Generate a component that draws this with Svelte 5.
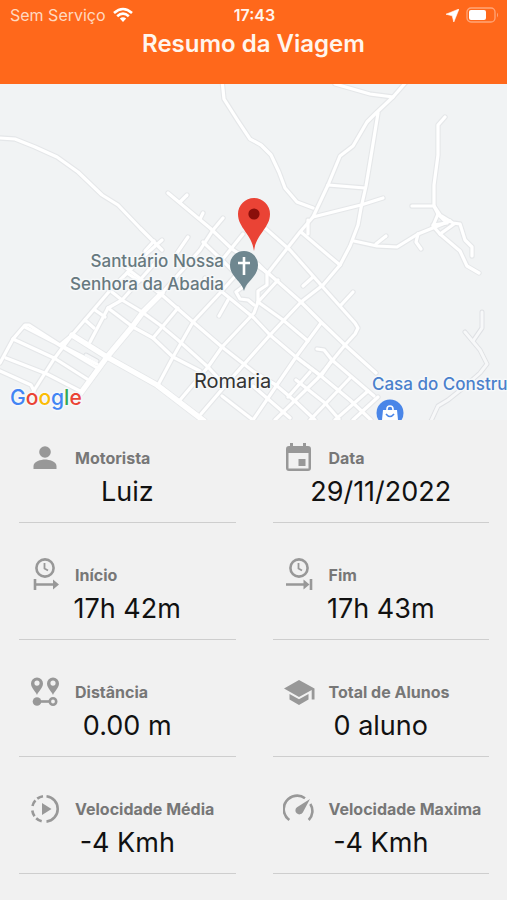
<script>
  const streets = [
    'M0 138 15 139 35 147 57 157 78 172 102 195 118 205 140 228 162 250',
    'M222 80 224 99 238 121 250 139 261 145 271 155 279 172 285 188 297 202 313 208',
    'M335 84 370 94 393 97',
    'M407 81 393 97 376 113 367 122 353 146 340 156 328 185 313 217 300 232 268 273',
    'M378 113 372 150 366 186 361 208 358 225 350 246 340 265 323 285 301 302 270 335 230 380 201 414',
    'M328 185 365 188', 'M313 217 361 205 383 198', 'M308 220 308 234',
    'M445 117 438 125 438 155 434 185 434 206 440 215 453 223 460 224 465 240 472 247 472 256',
    'M412 206 434 206 438 214 433 226 440 234 460 251 467 266 479 273',
    'M438 214 447 223 433 225', 'M440 234 454 224',
    'M354 241 377 246 397 247 418 234 450 221', 'M376 244 386 236', 'M418 234 416 242 421 249',
    'M168 193 210 228 232 249 268 273 301 302 321 322 345 345 376 373',
    'M180 202 187 195', 'M200 219 203 213',
    'M265 228 290 250 321 285 355 323 358 328 355 334 345 345 318 378 275 420',
    'M301 232 328 255 340 265', 'M341 305 353 292', 'M303 286 313 277',
    'M203 242 222 260 232 270', 'M222 260 243 234',
    'M205 278 254 318 270 335 296 357 321 376 350 400 371 420',
    'M258 302 283 320 308 341',
    'M254 305 248 300 240 299 236 292 244 286', 'M258 302 258 291 267 285 267 273 258 264',
    'M125 267 162 295 193 322 222 347 254 372 276 385 296 402 315 420',
    'M112 292 122 300 142 312 160 325 178 340 208 367 222 382',
    'M108 308 133 327 153 338 173 357 200 371',
    'M317 349 324 350 332 360 374 396', 'M296 357 321 376 332 360',
    'M162 293 200 250 213 230 223 218', 'M177 253 188 237', 'M145 251 154 241',
    'M158 385 173 357 193 322 220 293 236 275', 'M153 338 178 308', 'M142 312 162 293',
    'M180 400 208 367 222 347 254 313 258 302 278 280', 'M219 316 228 300',
    'M253 420 296 357 321 323', 'M310 420 350 378', 'M335 420 368 391', 'M353 420 378 397',
    'M288 397 310 372', 'M296 380 325 403 339 419', 'M222 396 253 420', 'M253 386 290 418',
    'M72 335 113 287 143 257 162 240', 'M90 342 108 308 122 300 155 263',
    'M95 310 105 317', 'M85 320 94 328', 'M127 273 139 281',
    'M0 363 13 339 25 325 29 325 60 345 72 335', 'M72 335 54 359 33 392',
    'M25 327 54 342 99 369', 'M13 339 54 358 87 379', 'M6 358 47 374 80 391',
    'M0 371 31 385 34 391', 'M60 345 97 364'
  ];
  const avenues = ['M80 394 107 357 132 327 143 312 162 293', 'M72 335 107 357 157 385 204 421'];
  const lanes = ['M482 312 482 328 473 341', 'M465 332 480 350 487 364 480 373 463 388 448 400 438 406 431 421', 'M86 355 97 361'];

  const items = [
    { icon: 'person', label: 'Motorista', value: 'Luiz' },
    { icon: 'calendar', label: 'Data', value: '29/11/2022' },
    { icon: 'start', label: 'Início', value: '17h 42m' },
    { icon: 'end', label: 'Fim', value: '17h 43m' },
    { icon: 'distance', label: 'Distância', value: '0.00 m' },
    { icon: 'school', label: 'Total de Alunos', value: '0 aluno' },
    { icon: 'average', label: 'Velocidade Média', value: '-4 Kmh' },
    { icon: 'speed', label: 'Velocidade Maxima', value: '-4 Kmh' }
  ];
</script>

<div class="screen">
  <header>
    <div class="status">
      <div class="carrier">
        <span>Sem Serviço</span>
        <svg width="20" height="16" viewBox="0 0 20 16" fill="none" stroke="#fff" stroke-width="2.6" aria-hidden="true">
          <path d="M1 6Q10-2 19 6M4.2 9.3Q10 4 15.8 9.3" />
          <path d="M6.8 11.6Q10 8.8 13.2 11.6L10 15Z" fill="#fff" stroke="none" />
        </svg>
      </div>
      <time>17:43</time>
      <div class="indicators">
        <svg width="13" height="13" viewBox="0 0 13 13" aria-hidden="true"><path d="M13 0 7.8 13 6.2 6.8 0 5.2Z" fill="#fff" stroke="#fff" stroke-width=".6" /></svg>
        <svg width="33" height="16" viewBox="0 0 33 16" aria-hidden="true">
          <rect x="1" y="1" width="28" height="14" rx="4" fill="none" stroke="#ffa578" stroke-width="1.3" />
          <rect x="3" y="3" width="17" height="10" rx="2" fill="#fff" />
          <path d="M31 5.5Q33 8 31 10.5Z" fill="#ffa578" />
        </svg>
      </div>
    </div>
    <h1>Resumo da Viagem</h1>
  </header>

  <svg class="map" viewBox="0 84 507 336" role="img" aria-label="Mapa de Romaria">
    <g class="casing">
      {#each streets as d}<path {d} />{/each}
    </g>
    <g class="casing wide">
      {#each avenues as d}<path {d} />{/each}
    </g>
    <g class="lane-casing">
      {#each lanes as d}<path {d} />{/each}
    </g>
    <g class="road">
      {#each streets as d}<path {d} />{/each}
    </g>
    <g class="road wide">
      {#each avenues as d}<path {d} />{/each}
    </g>
    <g class="lane">
      {#each lanes as d}<path {d} />{/each}
    </g>

    <g class="place" text-anchor="end">
      <text x="224" y="267">Santuário Nossa</text>
      <text x="224" y="290">Senhora da Abadia</text>
    </g>
    <path d="M244 291C242 281 230 277 230 265A14 14 0 0 1 258 265C258 277 246 281 244 291Z" fill="#6f8790" />
    <path d="M244 257V275M238 263H250" stroke="#fff" stroke-width="2.6" />
    <path d="M254 251C252 234 238 228 238 214A16 16 0 0 1 270 214C270 228 256 234 254 251Z" fill="#ea4335" />
    <circle cx="254" cy="214" r="5.6" fill="#8a0f0b" />
    <text class="city" x="194" y="388">Romaria</text>
    <text class="shop" x="372" y="390">Casa do Constru</text>
    <circle cx="390" cy="413" r="13.5" fill="#4a86e8" />
    <path d="M383 410H397L398 420H382Z" fill="#fff" />
    <path d="M387 411V409A3 3 0 0 1 393 409V411" fill="none" stroke="#fff" stroke-width="1.6" />
    <path d="M386 414Q390 419 394 414" fill="none" stroke="#4a86e8" stroke-width="1.6" />
    <text class="google" x="10" y="405"><tspan fill="#4285f4">G</tspan><tspan fill="#ea4335">o</tspan><tspan fill="#fbbc05">o</tspan><tspan fill="#4285f4">g</tspan><tspan fill="#34a853">l</tspan><tspan fill="#ea4335">e</tspan></text>
  </svg>

  <dl>
    {#each items as item}
      <div class="item">
        <dt>
          <svg width="32" height="36" viewBox="0 0 32 36" aria-hidden="true">
            {#if item.icon === 'person'}
              <circle cx="16" cy="12" r="5.8" />
              <path d="M4.500 29V26C4.500 21.500 12 19.500 16 19.500S27.500 21.500 27.500 26V29Z" />
            {:else if item.icon === 'calendar'}
              <path fill-rule="evenodd" d="M7 3H10V6H20V3H23V6H25Q28 6 28 9V28Q28 31 25 31H6Q3 31 3 28V9Q3 6 6 6H7ZM5.500 13V28.500H25.500V13ZM15.500 19H22.500V26H15.500Z" />
            {:else if item.icon === 'start' || item.icon === 'end'}
              <g class="line">
                <circle cx="16" cy="11" r="8.600" />
                <path d="M15.500 6V11.500L19 13.500" stroke-width="1.800" />
                {#if item.icon === 'start'}
                  <path d="M6 22V33M6 27.500H25" />
                {:else}
                  <path d="M3 27.500H22M28 22V33" />
                {/if}
              </g>
              {#if item.icon === 'start'}
                <path d="M24 22.500 30 27.500 24 32.500Z" />
              {:else}
                <path d="M20.500 22.500 26.500 27.500 20.500 32.500Z" />
              {/if}
            {:else if item.icon === 'distance'}
              <path fill-rule="evenodd" d="M8 21C7 18 2 14 2 9.500A6 6 0 0 1 14 9.500C14 14 9 18 8 21ZM8 6.500A2.600 2.600 0 1 0 8 11.700A2.600 2.600 0 1 0 8 6.500Z" />
              <path fill-rule="evenodd" d="M24 21C23 18 18 14 18 9.500A6 6 0 0 1 30 9.500C30 14 25 18 24 21ZM24 6.500A2.600 2.600 0 1 0 24 11.700A2.600 2.600 0 1 0 24 6.500Z" />
              <circle cx="8" cy="27.500" r="4.300" />
              <path class="line" d="M8 27.500H20" />
              <circle class="line" cx="24" cy="27.500" r="3.200" />
            {:else if item.icon === 'school'}
              <path d="M1 14.500 16 6 31.500 14.500V25.500H28.700V16L16 23Z" />
              <path d="M6.500 20 16 25.300 25.500 20V25.500L16 31 6.500 25.500Z" />
            {:else if item.icon === 'average'}
              <g class="line">
                <path d="M17.500 5.200A12.800 12.800 0 0 1 17.500 30.600" />
                <path d="M14 5.200A12.800 12.800 0 0 0 3.300 16M3.300 19.500A12.800 12.800 0 0 0 14 30.600" stroke-dasharray="6.300 2.500" />
              </g>
              <path d="M13 12V24L22.500 18Z" />
            {:else}
              <g class="line">
                <path d="M22 7.200A12.800 12.800 0 0 0 6.300 29M27.300 13A12.800 12.800 0 0 1 25.700 29" />
              </g>
              <path d="M27 8 19.800 21.500A4 4 0 1 1 14 16.200Z" />
            {/if}
          </svg>
          {item.label}
        </dt>
        <dd>{item.value}</dd>
      </div>
    {/each}
  </dl>
</div>

<style>
  :global(body) {
    background: #f1f1f1;
  }
  .screen {
    font-family: Inter, 'Liberation Sans', sans-serif;
    overflow: hidden;
  }
  header {
    height: 84px;
    background: #ff681b;
    color: #fff5ed;
  }
  .status {
    display: grid;
    grid-template-columns: 1fr auto 1fr;
    align-items: center;
    height: 30px;
    padding: 0 8px 0 10px;
    font-size: 16px;
  }
  .carrier,
  .indicators {
    display: flex;
    align-items: center;
    gap: 7px;
    color: #ffd9c0;
  }
  .indicators {
    justify-content: flex-end;
  }
  .status time {
    font-weight: 600;
  }
  h1 {
    margin: 0;
    font-size: 24px;
    line-height: 28px;
    font-weight: 600;
    text-align: center;
  }
  .map {
    display: block;
    width: 100%;
    background: #f1f3f4;
  }
  .casing,
  .road,
  .lane-casing,
  .lane {
    fill: none;
    stroke-linecap: round;
    stroke-linejoin: round;
  }
  .casing {
    stroke: #e5e7e9;
    stroke-width: 5.4;
  }
  .road {
    stroke: #fff;
    stroke-width: 3.2;
  }
  .casing.wide {
    stroke-width: 7;
  }
  .road.wide {
    stroke-width: 5.4;
  }
  .lane-casing {
    stroke: #dfe1e4;
    stroke-width: 5;
  }
  .lane {
    stroke: #f7f8f9;
    stroke-width: 3;
  }
  .map text {
    paint-order: stroke;
    stroke: #f6f8f9;
    stroke-width: 3px;
    stroke-linejoin: round;
  }
  .map .place,
  .map .shop {
    font-size: 17px;
    font-weight: 500;
  }
  .place {
    fill: #67797f;
  }
  .map .city {
    font-size: 20px;
    fill: #333;
  }
  .map .shop {
    fill: #4a80cc;
  }
  .map .google {
    font-size: 21px;
    font-weight: 500;
  }
  dl {
    display: grid;
    grid-template-columns: 1fr 1fr;
    gap: 31px 37px;
    margin: 0;
    padding: 17px 18px 26px 19px;
  }
  .item {
    border-bottom: 1px solid #cecece;
    padding-bottom: 16px;
  }
  dt {
    display: flex;
    align-items: center;
    gap: 14px;
    height: 41px;
    padding-left: 10px;
    font-size: 16px;
    font-weight: 700;
    color: #777;
    white-space: nowrap;
  }
  dt svg {
    flex: none;
    fill: #989898;
  }
  .line {
    fill: none;
    stroke: #989898;
    stroke-width: 2.6;
  }
  dd {
    margin: 0;
    font-size: 27px;
    line-height: 28px;
    text-align: center;
    color: #111;
  }
</style>
